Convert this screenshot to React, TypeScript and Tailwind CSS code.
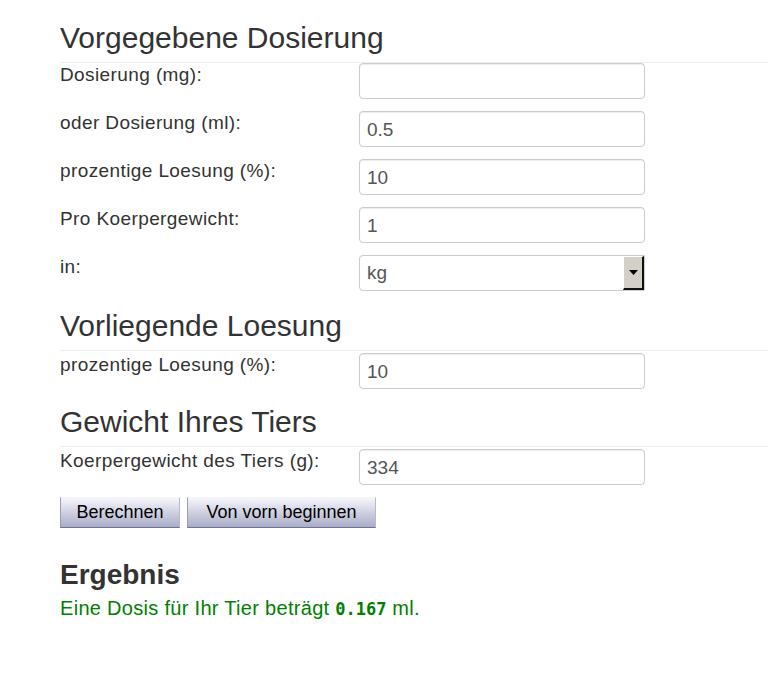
import type { ReactElement } from "react";

type Field = {
  label: string;
  value: string;
  select?: boolean;
};

const sections: { title: string; gap: string; fields: Field[] }[] = [
  {
    title: "Vorgegebene Dosierung",
    gap: "",
    fields: [
      { label: "Dosierung (mg):", value: "" },
      { label: "oder Dosierung (ml):", value: "0.5" },
      { label: "prozentige Loesung (%):", value: "10" },
      { label: "Pro Koerpergewicht:", value: "1" },
      { label: "in:", value: "kg", select: true }
    ]
  },
  {
    title: "Vorliegende Loesung",
    gap: "mt-[18px]",
    fields: [{ label: "prozentige Loesung (%):", value: "10" }]
  },
  {
    title: "Gewicht Ihres Tiers",
    gap: "mt-[16px]",
    fields: [{ label: "Koerpergewicht des Tiers (g):", value: "334" }]
  }
];

const SelectBox = ({ value }: { value: string }): ReactElement => (
  <div className="flex h-[36px] w-[286px] items-stretch rounded-l-[4px] border border-[#ccc] bg-white">
    <span className="flex flex-1 items-center pl-[7px] text-[19px] text-[#555]">{value}</span>
    <span className="flex w-[21px] items-center justify-center border-t border-l border-t-white border-l-white border-r-2 border-b-2 border-r-[#111] border-b-[#111] bg-[#d4d0c8]">
      <svg width="9" height="5" viewBox="0 0 9 5">
        <polygon points="0,0 9,0 4.5,5" fill="#000" />
      </svg>
    </span>
  </div>
);

const App = (): ReactElement => {
  return (
    <div className="min-h-[680px] bg-white pl-[60px] pt-[21px] font-['Liberation_Sans',Arial,sans-serif] text-[#333]">
      {sections.map((section, i) => (
        <section key={section.title} className={section.gap}>
          <h2 className="border-b border-[#eee] pb-[8px] text-[30px] leading-[33px] font-normal">
            {section.title}
          </h2>
          <div className={i === 0 ? "pt-0" : "pt-[2px]"}>
            {section.fields.map((field) => (
              <div key={field.label + field.value} className="mb-[12px] flex items-start">
                <label className="w-[299px] pt-[2px] text-[19px] leading-[20px] tracking-[0.4px]">
                  {field.label}
                </label>
                {field.select ? (
                  <SelectBox value={field.value} />
                ) : (
                  <input
                    readOnly
                    value={field.value}
                    className="h-[36px] w-[286px] rounded-[4px] border border-[#ccc] bg-white px-[7px] pt-[2px] text-[19px] text-[#555] shadow-[inset_0_1px_1px_rgba(0,0,0,0.075)] outline-none"
                  />
                )}
              </div>
            ))}
          </div>
        </section>
      ))}

      <div className="flex gap-[7px]">
        <button className="h-[31px] w-[120px] border border-t-[#f4f4f8] border-l-[#9a9cb0] border-r-[#b8bac8] border-b-[#6f7290] bg-gradient-to-b from-[#f6f6fb] to-[#a9acc7] text-[18px] text-black">
          Berechnen
        </button>
        <button className="h-[31px] w-[189px] border border-t-[#f4f4f8] border-l-[#9a9cb0] border-r-[#b8bac8] border-b-[#6f7290] bg-gradient-to-b from-[#f6f6fb] to-[#a9acc7] text-[18px] text-black">
          Von vorn beginnen
        </button>
      </div>

      <h2 className="mt-[30px] text-[28px] leading-[33px] font-bold">Ergebnis</h2>
      <p className="mt-[5px] text-[20px] leading-[24px] tracking-[0.3px] text-[#008000]">
        Eine Dosis für Ihr Tier beträgt{" "}
        <strong className="font-['DejaVu_Sans_Mono',monospace] text-[17px] tracking-normal">0.167</strong> ml.
      </p>
    </div>
  );
};

export default App;
